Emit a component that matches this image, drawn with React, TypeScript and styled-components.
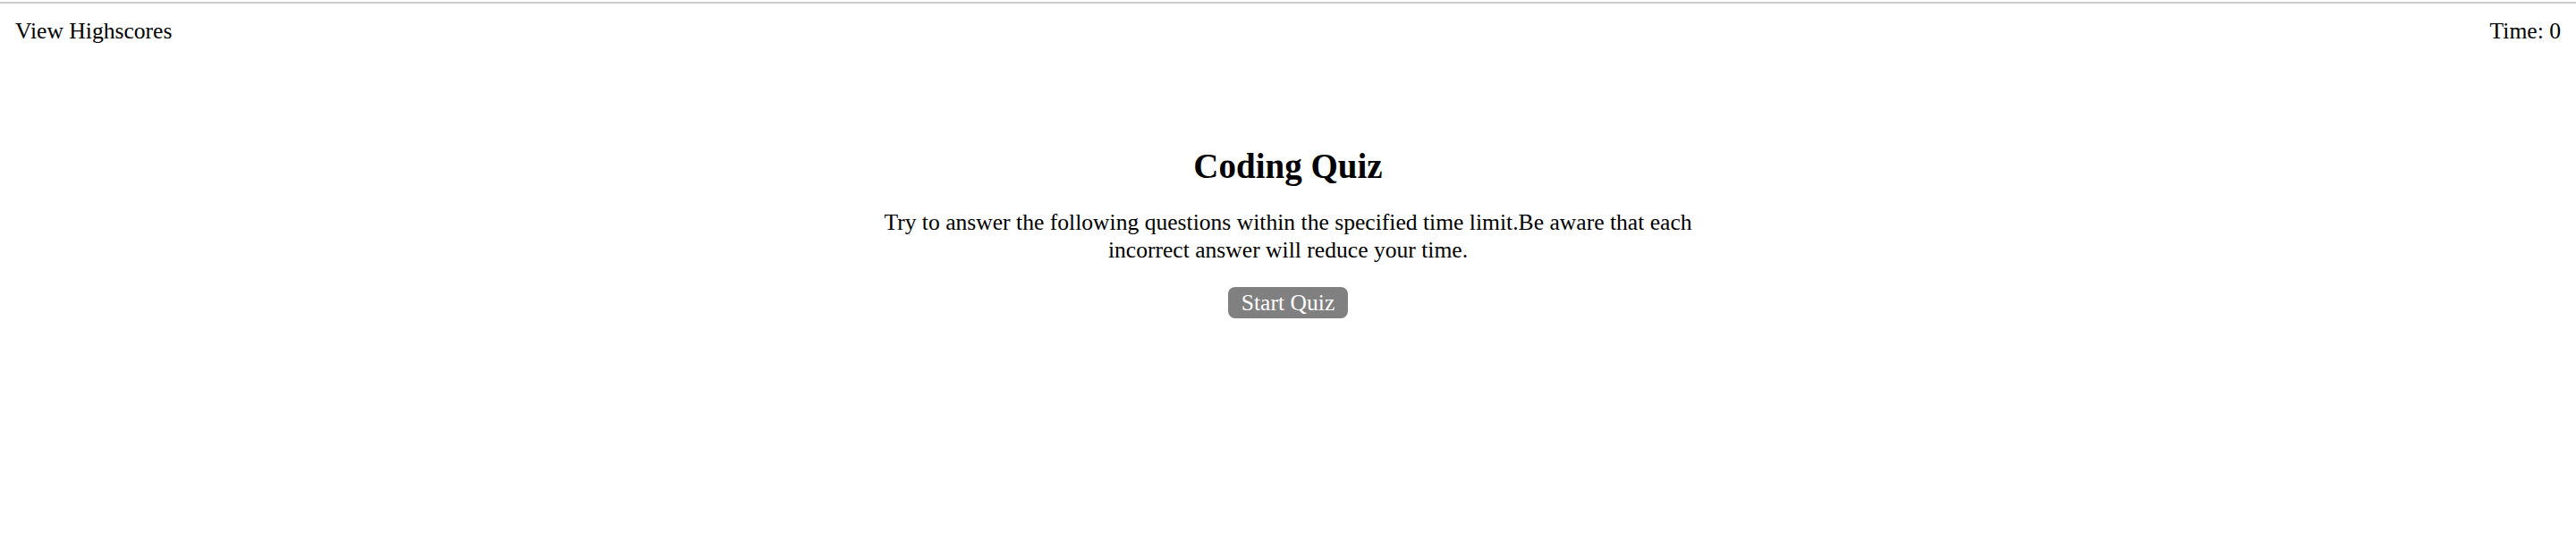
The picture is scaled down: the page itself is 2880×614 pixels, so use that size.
import * as React from 'react';
import styled, { createGlobalStyle } from 'styled-components';

const GlobalStyle = createGlobalStyle`
  html, body {
    margin: 0;
    padding: 0;
    background: #ffffff;
  }
  body {
    font-family: 'Liberation Serif', 'Times New Roman', serif;
    color: #000000;
  }
`;

const Page = styled.div`
  padding-top: 2px;
`;

const Header = styled.header`
  display: flex;
  justify-content: space-between;
  align-items: center;
  border-top: 2px solid #cccccc;
  padding: 16px 17px 0 17px;
  font-size: 25.6px;
  line-height: 29px;
`;

const HeaderLink = styled.span`
  cursor: pointer;
`;

const Main = styled.main`
  display: flex;
  flex-direction: column;
  align-items: center;
  text-align: center;
  padding-top: 115px;
`;

const Title = styled.h1`
  margin: 0;
  font-size: 39px;
  line-height: 44px;
  font-weight: bold;
`;

const Intro = styled.p`
  margin: 25px 0 0 0;
  max-width: 980px;
  font-size: 25.6px;
  line-height: 31px;
`;

const StartButton = styled.button`
  margin-top: 26px;
  padding: 3px 15px;
  font-family: 'Liberation Serif', 'Times New Roman', serif;
  font-size: 25.6px;
  line-height: 29px;
  color: #ffffff;
  background: #808080;
  border: none;
  border-radius: 8px;
  cursor: pointer;
`;

const App = () => {
  const [time] = React.useState(0);

  return (
    <Page>
      <GlobalStyle />
      <Header>
        <HeaderLink>View Highscores</HeaderLink>
        <span>Time: {time}</span>
      </Header>
      <Main>
        <Title>Coding Quiz</Title>
        <Intro>
          Try to answer the following questions within the specified time limit.Be aware that each
          incorrect answer will reduce your time.
        </Intro>
        <StartButton type="button">Start Quiz</StartButton>
      </Main>
    </Page>
  );
};

export default App;
